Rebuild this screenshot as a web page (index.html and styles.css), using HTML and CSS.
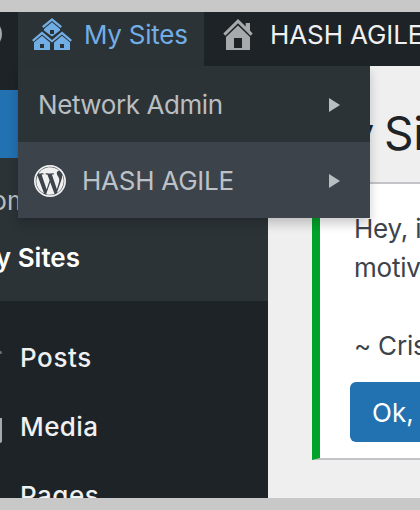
FILE: index.html
```html
<!DOCTYPE html>
<html lang="en">
<head>
<meta charset="utf-8">
<title>My Sites</title>
<link rel="stylesheet" href="styles.css">
</head>
<body>
<div class="screen">
  <header class="adminbar">
    <div class="bar-logo"><span class="logo-edge"></span></div>
    <div class="bar-item active">
      <svg class="sites-icon" viewBox="0 0 40 34" width="40" height="34">
        <g fill="currentColor">
          <path d="M10 8.200 20 0l10 8.200-1.500 1.800L20 3 11.500 10z"/>
          <path fill-rule="evenodd" d="M20 4.300 28 11v1.500L20 18.500l-8-6V11zM18 12v4h4V12z"/>
          <path d="M0 22 10 13.400l10 8.600 10-8.600L40 22l-1.500 1.800L30 16.600l-10 8-10-8-8.500 7.200z"/>
          <path fill-rule="evenodd" d="M10 17.700l8 6.700V32H2v-7.600zM8 26v4h4v-4z"/>
          <path fill-rule="evenodd" d="M30 17.700l8 6.700V32H22v-7.600zM28 26v4h4v-4z"/>
        </g>
      </svg>
      <span class="t-mysites">My Sites</span>
      <div class="dropdown">
        <div class="drop-item"><span class="t-network">Network Admin</span><i class="arrow"></i></div>
        <div class="drop-item hover">
          <svg class="wp-icon" viewBox="0 0 122.520 122.523" width="32" height="32">
            <g fill="currentColor">
              <path d="m8.708 61.260c0 20.802 12.089 38.779 29.619 47.298l-25.069-68.686c-2.916 6.536-4.550 13.769-4.550 21.388z"/>
              <path d="m96.740 58.608c0-6.495-2.333-10.993-4.334-14.494-2.664-4.329-5.161-7.995-5.161-12.324 0-4.831 3.664-9.328 8.825-9.328.233 0 .454.029.681.042-9.350-8.566-21.807-13.796-35.489-13.796-18.360 0-34.513 9.420-43.910 23.688 1.233.037 2.395.063 3.382.063 5.497 0 14.006-.667 14.006-.667 2.833-.167 3.167 3.994.337 4.329 0 0-2.847.335-6.015.501l19.138 56.925 11.501-34.493-8.188-22.434c-2.830-.166-5.511-.501-5.511-.501-2.832-.166-2.500-4.496.332-4.329 0 0 8.679.667 13.843.667 5.496 0 14.006-.667 14.006-.667 2.835-.167 3.168 3.994.337 4.329 0 0-2.853.335-6.015.501l18.992 56.494 5.242-17.517c2.272-7.269 4.001-12.490 4.001-16.989z"/>
              <path d="m62.184 65.857-15.768 45.819c4.708 1.384 9.687 2.141 14.846 2.141 6.120 0 11.989-1.058 17.452-2.979-.141-.225-.269-.464-.374-.724z"/>
              <path d="m107.376 36.046c.226 1.674.354 3.471.354 5.404 0 5.333-.996 11.328-3.996 18.824l-16.053 46.413c15.624-9.111 26.133-26.038 26.133-45.426.001-9.137-2.333-17.729-6.438-25.215z"/>
              <path d="m61.262 0c-33.779 0-61.262 27.481-61.262 61.260 0 33.783 27.483 61.263 61.262 61.263 33.778 0 61.265-27.480 61.265-61.263-.001-33.779-27.487-61.260-61.265-61.260zm0 115.900c-30.100 0-54.600-24.500-54.600-54.640 0-30.100 24.500-54.600 54.600-54.600s54.600 24.500 54.600 54.600c0 30.140-24.500 54.640-54.600 54.640z"/>
            </g>
          </svg>
          <span class="t-hash">HASH AGILE</span><i class="arrow"></i>
        </div>
      </div>
    </div>
    <div class="bar-item site">
      <svg class="home-icon" viewBox="0 0 30 32" width="30" height="32">
        <path fill="currentColor" d="M.3 14.500 15 0l7.700 7.600V4H27v7.800l2.700 2.700-2 2.200L15 4.200 2.300 16.700z"/>
        <path fill="currentColor" fill-rule="evenodd" d="M15 6.400 27 18v13H3V18zM11 19v10h8V19z"/>
      </svg>
      <span class="t-site">HASH AGILE</span>
    </div>
  </header>
  <div class="body">
    <nav class="sidebar">
      <div class="current"></div>
      <div class="submenu">
        <div class="sub home">Home</div>
        <div class="sub sites"><span>My Sites</span></div>
      </div>
      <div class="menu">
        <div class="menu-item"><i class="pin"></i><span class="t-posts">Posts</span></div>
        <div class="menu-item"><i class="media"></i><span class="t-media">Media</span></div>
        <div class="menu-item"><i></i><span class="t-pages">Pages</span></div>
      </div>
    </nav>
    <main class="content">
      <h1>My Sites</h1>
      <section class="notice">
        <p>Hey, it</p>
        <p>motivate</p>
        <p class="sign">~ Cristian</p>
        <button class="ok">Ok, I</button>
      </section>
    </main>
  </div>
</div>
</body>
</html>
```
FILE: styles.css
```css
* { box-sizing: border-box; }
body { margin: 0; background: #c8c8c8; font-family: Inter, "Liberation Sans", sans-serif; font-size: 26px; }
.screen { width: 420px; height: 510px; padding: 12px 0; overflow: hidden; display: flex; flex-direction: column; }
.adminbar { height: 54px; flex: none; display: flex; background: #1d2327; color: #f0f0f1; white-space: nowrap; position: relative; z-index: 2; }
.bar-logo { width: 18px; flex: none; overflow: hidden; padding-top: 6px; }
.logo-edge { display: block; width: 32px; height: 32px; margin-left: -30px; border-radius: 50%; background: #a7aaad; }
.bar-item { position: relative; display: flex; align-items: flex-start; line-height: 46px; }
.active { width: 186px; flex: none; background: #2c3337; color: #72aee6; padding-left: 14px; }
.t-mysites { letter-spacing: -.25px; }
.sites-icon { margin: 6px 12px 0 0; flex: none; }
.site { padding-left: 18px; }
.t-site { letter-spacing: -.1px; }
.home-icon { margin: 7px 17px 0 1px; flex: none; color: #a7aaad; }
.dropdown { position: absolute; left: 0; top: 54px; width: 352px; background: #2c3337; box-shadow: 0 6px 10px rgba(0,0,0,.2); }
.drop-item { height: 76px; padding: 2px 30px 0 20px; display: flex; align-items: center; color: #b9bec1; line-height: 74px; }
.hover { background: #3c434a; padding-left: 16px; color: #bcc2c8; }
.t-network { letter-spacing: -.42px; }
.t-hash { letter-spacing: -.25px; }
.wp-icon { color: #f0f0f1; margin: 0 16px 0 0; flex: none; }
.arrow { margin-left: auto; border-left: 11px solid #b9bec1; border-top: 7px solid transparent; border-bottom: 7px solid transparent; }
.body { flex: 1; min-height: 0; display: flex; }
.sidebar { width: 268px; flex: none; background: #1d2327; padding-top: 24px; color: #f0f0f1; overflow: hidden; white-space: nowrap; }
.current { height: 68px; background: #2271b1; }
.submenu { height: 143px; background: #2c3337; padding-top: 14px; }
.sub { line-height: 58px; height: 57px; }
.home { color: #b9bec1; margin-left: -28px; }
.sites { font-weight: 600; color: #fff; width: 80px; display: flex; justify-content: flex-end; }
.menu { padding-top: 22px; font-weight: 500; }
.menu-item { height: 69px; line-height: 69px; display: flex; align-items: center; }
.t-posts { letter-spacing: .6px; }
.t-media { letter-spacing: .4px; }
.t-pages { letter-spacing: .5px; }
.menu-item i { width: 20px; flex: none; }
.menu-item .pin { width: 2px; height: 3px; margin-right: 18px; margin-top: -10px; background: #6c7175; border-radius: 0 2px 2px 0; }
.menu-item .media { width: 2px; height: 25px; margin-right: 18px; margin-top: 8px; background: #a7aaad; border-radius: 0 0 2px 0; }
.content { flex: 1; min-width: 0; background: #efeff0; padding-left: 44px; overflow: hidden; white-space: nowrap; }
h1 { margin: 0 0 0 -5px; height: 116px; line-height: 135px; font-size: 46px; font-weight: 400; word-spacing: -3px; letter-spacing: -.2px; color: #1d2327; }
.notice { width: 200px; height: 278px; background: #fff; border: 2px solid #c3c4c7; border-left: 8px solid #00a32a; padding: 25px 0 0 34px; color: #3c434a; }
p { margin: 0; line-height: 39px; letter-spacing: -.2px; }
.sign { margin-top: 39px; }
.ok { display: block; margin: 17px 0 0 -4px; width: 140px; height: 60px; padding: 1px 22px 0; border: 0; border-radius: 6px; background: #2271b1; color: #fff; font: 26px/59px Inter, sans-serif; text-align: left; }
```
